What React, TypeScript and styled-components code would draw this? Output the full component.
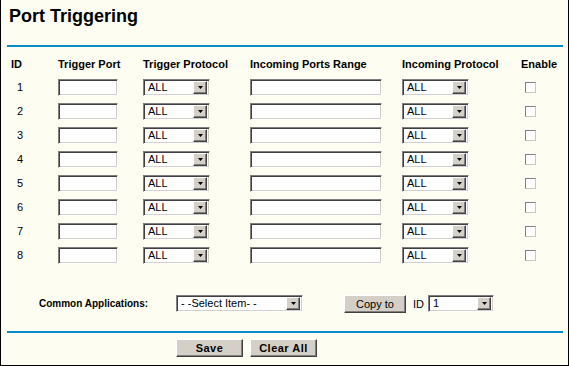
import { Fragment } from 'react';
import styled, { createGlobalStyle } from 'styled-components';

const GlobalStyle = createGlobalStyle`
  html, body {
    margin: 0;
    padding: 0;
    background: #ffffff;
  }
  body {
    font-family: "Liberation Sans", Arial, sans-serif;
    color: #000;
  }
`;

const Panel = styled.div`
  width: 569px;
  height: 366px;
  box-sizing: border-box;
  border: 1px solid #000;
  border-top: none;
  background: #fdfdf2;
  display: flex;
  flex-direction: column;
`;

const Title = styled.h1`
  margin: 6px 0 0 8px;
  font-size: 18px;
  line-height: 21px;
  font-weight: 700;
`;

const Divider = styled.div<{ $top: number }>`
  height: 2px;
  margin: ${({ $top }) => $top}px 5px 0 6px;
  background: #0a8bc9;
`;

const Table = styled.div`
  display: grid;
  grid-template-columns: 47px 85px 107px 152px 119px 1fr;
  grid-template-rows: 23px repeat(8, 24px);
  align-items: center;
  margin-top: 5px;
  padding-left: 10px;
`;

const HeadCell = styled.div`
  font-size: 11px;
  font-weight: 700;
  white-space: nowrap;
`;

const IdCell = styled.div`
  font-size: 11px;
  padding-left: 6px;
`;

const Cell = styled.div<{ $indent?: number }>`
  display: flex;
  align-items: center;
  padding-left: ${({ $indent = 0 }) => $indent}px;
`;

const sunken = `
  box-sizing: border-box;
  background: #ffffff;
  border-top: 1px solid #808080;
  border-left: 1px solid #808080;
  border-bottom: 1px solid #ffffff;
  border-right: 1px solid #ffffff;
  box-shadow: inset 1px 1px 0 #404040, inset -1px -1px 0 #d4d0c8;
`;

const TextBox = styled.input<{ $width: number }>`
  ${sunken}
  width: ${({ $width }) => $width}px;
  height: 17px;
  padding: 0 3px;
  margin: 0;
  font: 11px "Liberation Sans", Arial, sans-serif;
  outline: none;
`;

const SelectBox = styled.div<{ $width: number }>`
  ${sunken}
  width: ${({ $width }) => $width}px;
  height: 17px;
  display: flex;
  align-items: center;
  padding: 2px 2px 2px 4px;
`;

const SelectText = styled.span`
  flex: 1;
  font-size: 11px;
  line-height: 13px;
  white-space: nowrap;
  overflow: hidden;
`;

const ArrowButton = styled.span`
  width: 14px;
  height: 13px;
  box-sizing: border-box;
  background: #d4d0c8;
  border-top: 1px solid #ffffff;
  border-left: 1px solid #ffffff;
  border-right: 1px solid #404040;
  border-bottom: 1px solid #404040;
  box-shadow: inset -1px -1px 0 #808080;
  display: flex;
  align-items: center;
  justify-content: center;
`;

const Check = styled.input`
  appearance: none;
  margin: 0;
  width: 11px;
  height: 11px;
  box-sizing: border-box;
  background: #ffffff;
  border-top: 1px solid #808080;
  border-left: 1px solid #808080;
  border-bottom: 1px solid #c8c8c0;
  border-right: 1px solid #c8c8c0;
`;

const ToolRow = styled.div`
  display: flex;
  align-items: center;
  height: 19px;
  margin-top: 27px;
  padding-left: 38px;
`;

const ToolLabel = styled.span<{ $width: number }>`
  width: ${({ $width }) => $width}px;
  font-size: 10px;
  font-weight: 700;
  white-space: nowrap;
`;

const PlainLabel = styled.span`
  width: 15px;
  margin-left: 7px;
  font-size: 11px;
`;

const Button = styled.button<{ $width: number; $bold?: boolean }>`
  width: ${({ $width }) => $width}px;
  height: 18px;
  box-sizing: border-box;
  padding: 0;
  margin: 0;
  background: #d4d0c8;
  border-top: 1px solid #ffffff;
  border-left: 1px solid #ffffff;
  border-right: 1px solid #404040;
  border-bottom: 1px solid #404040;
  box-shadow: inset -1px -1px 0 #808080;
  font-family: "Liberation Sans", Arial, sans-serif;
  font-size: 11px;
  font-weight: ${({ $bold }) => ($bold ? 700 : 400)};
  letter-spacing: ${({ $bold }) => ($bold ? '0.5px' : '0')};
  color: #000;
`;

const CopyButton = styled(Button)`
  margin-left: 41px;
`;

const Actions = styled.div`
  display: flex;
  gap: 7px;
  margin-top: 6px;
  padding-left: 175px;
`;

const Arrow = () => (
  <svg width="5" height="3" viewBox="0 0 5 3">
    <polygon points="0,0 5,0 2.5,3" fill="#000" />
  </svg>
);

const Select = ({ value, width }: { value: string; width: number }) => (
  <SelectBox $width={width}>
    <SelectText>{value}</SelectText>
    <ArrowButton>
      <Arrow />
    </ArrowButton>
  </SelectBox>
);

const rows = [1, 2, 3, 4, 5, 6, 7, 8];

const App = () => {
  return (
    <>
      <GlobalStyle />
      <Panel>
        <Title>Port Triggering</Title>
        <Divider $top={18} />

        <Table>
          <HeadCell>ID</HeadCell>
          <HeadCell>Trigger Port</HeadCell>
          <HeadCell>Trigger Protocol</HeadCell>
          <HeadCell>Incoming Ports Range</HeadCell>
          <HeadCell>Incoming Protocol</HeadCell>
          <HeadCell>Enable</HeadCell>

          {rows.map((id) => (
            <Fragment key={id}>
              <IdCell>{id}</IdCell>
              <Cell>
                <TextBox $width={60} />
              </Cell>
              <Cell>
                <Select value="ALL" width={67} />
              </Cell>
              <Cell>
                <TextBox $width={132} />
              </Cell>
              <Cell>
                <Select value="ALL" width={67} />
              </Cell>
              <Cell $indent={4}>
                <Check type="checkbox" />
              </Cell>
            </Fragment>
          ))}
        </Table>

        <ToolRow>
          <ToolLabel $width={137}>Common Applications:</ToolLabel>
          <Select value="- -Select Item- -" width={127} />
          <CopyButton $width={62}>Copy to</CopyButton>
          <PlainLabel>ID</PlainLabel>
          <Select value="1" width={66} />
        </ToolRow>

        <Divider $top={18} />

        <Actions>
          <Button $width={67} $bold>
            Save
          </Button>
          <Button $width={67} $bold>
            Clear All
          </Button>
        </Actions>
      </Panel>
    </>
  );
};

export default App;
